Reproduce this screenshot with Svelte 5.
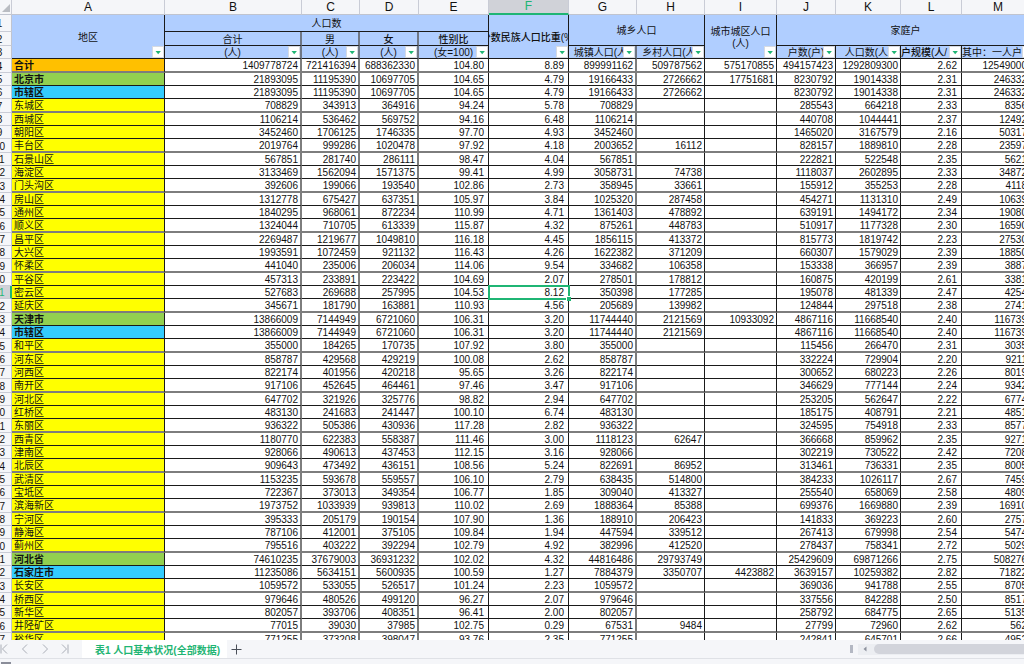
<script>
  const columns = [
    { id: 'A', width: 153 },
    { id: 'B', width: 137 },
    { id: 'C', width: 58 },
    { id: 'D', width: 59 },
    { id: 'E', width: 70 },
    { id: 'F', width: 80 },
    { id: 'G', width: 68 },
    { id: 'H', width: 68 },
    { id: 'I', width: 72 },
    { id: 'J', width: 59 },
    { id: 'K', width: 65 },
    { id: 'L', width: 61 },
    { id: 'M', width: 73 }
  ];

  // Fields: name, B..M. "-" marks an empty cell.
  const source = `合计 1409778724 721416394 688362330 104.80 8.89 899991162 509787562 575170855 494157423 1292809300 2.62 12549000
北京市 21893095 11195390 10697705 104.65 4.79 19166433 2726662 17751681 8230792 19014338 2.31 246332
市辖区 21893095 11195390 10697705 104.65 4.79 19166433 2726662 - 8230792 19014338 2.31 246332
东城区 708829 343913 364916 94.24 5.78 708829 - - 285543 664218 2.33 8356
西城区 1106214 536462 569752 94.16 6.48 1106214 - - 440708 1044441 2.37 12492
朝阳区 3452460 1706125 1746335 97.70 4.93 3452460 - - 1465020 3167579 2.16 50317
丰台区 2019764 999286 1020478 97.92 4.18 2003652 16112 - 828157 1889810 2.28 23597
石景山区 567851 281740 286111 98.47 4.04 567851 - - 222821 522548 2.35 5621
海淀区 3133469 1562094 1571375 99.41 4.99 3058731 74738 - 1118037 2602895 2.33 34872
门头沟区 392606 199066 193540 102.86 2.73 358945 33661 - 155912 355253 2.28 4118
房山区 1312778 675427 637351 105.97 3.84 1025320 287458 - 454271 1131310 2.49 10639
通州区 1840295 968061 872234 110.99 4.71 1361403 478892 - 639191 1494172 2.34 19080
顺义区 1324044 710705 613339 115.87 4.32 875261 448783 - 510917 1177328 2.30 16590
昌平区 2269487 1219677 1049810 116.18 4.45 1856115 413372 - 815773 1819742 2.23 27530
大兴区 1993591 1072459 921132 116.43 4.26 1622382 371209 - 660307 1579029 2.39 18850
怀柔区 441040 235006 206034 114.06 9.54 334682 106358 - 153338 366957 2.39 3887
平谷区 457313 233891 223422 104.69 2.07 278501 178812 - 160875 420199 2.61 3381
密云区 527683 269688 257995 104.53 8.12 350398 177285 - 195078 481339 2.47 4254
延庆区 345671 181790 163881 110.93 4.56 205689 139982 - 124844 297518 2.38 2741
天津市 13866009 7144949 6721060 106.31 3.20 11744440 2121569 10933092 4867116 11668540 2.40 116739
市辖区 13866009 7144949 6721060 106.31 3.20 11744440 2121569 - 4867116 11668540 2.40 116739
和平区 355000 184265 170735 107.92 3.80 355000 - - 115456 266470 2.31 3035
河东区 858787 429568 429219 100.08 2.62 858787 - - 332224 729904 2.20 9211
河西区 822174 401956 420218 95.65 3.26 822174 - - 300652 680223 2.26 8019
南开区 917106 452645 464461 97.46 3.47 917106 - - 346629 777144 2.24 9342
河北区 647702 321926 325776 98.82 2.94 647702 - - 253205 562647 2.22 6774
红桥区 483130 241683 241447 100.10 6.74 483130 - - 185175 408791 2.21 4851
东丽区 936322 505386 430936 117.28 2.82 936322 - - 324595 754918 2.33 8577
西青区 1180770 622383 558387 111.46 3.00 1118123 62647 - 366668 859962 2.35 9271
津南区 928066 490613 437453 112.15 3.16 928066 - - 302219 730522 2.42 7208
北辰区 909643 473492 436151 108.56 5.24 822691 86952 - 313461 736331 2.35 8005
武清区 1153235 593678 559557 106.10 2.79 638435 514800 - 384233 1026117 2.67 7459
宝坻区 722367 373013 349354 106.77 1.85 309040 413327 - 255540 658069 2.58 4809
滨海新区 1973752 1033939 939813 110.02 2.69 1888364 85388 - 699376 1669880 2.39 16910
宁河区 395333 205179 190154 107.90 1.36 188910 206423 - 141833 369223 2.60 2757
静海区 787106 412001 375105 109.84 1.94 447594 339512 - 267413 679998 2.54 5474
蓟州区 795516 403222 392294 102.79 4.92 382996 412520 - 278437 758341 2.72 5029
河北省 74610235 37679003 36931232 102.02 4.32 44816486 29793749 - 25429609 69871266 2.75 508276
石家庄市 11235086 5634151 5600935 100.59 1.27 7884379 3350707 4423882 3639157 10259382 2.82 71822
长安区 1059572 533055 526517 101.24 2.23 1059572 - - 369036 941788 2.55 8705
桥西区 979646 480526 499120 96.27 2.07 979646 - - 337556 842288 2.50 8517
新华区 802057 393706 408351 96.41 2.00 802057 - - 258792 684775 2.65 5135
井陉矿区 77015 39030 37985 102.75 0.29 67531 9484 - 27799 72960 2.62 562
裕华区 771255 373208 398047 93.76 2.35 771255 - - 242841 645701 2.66 4952`;

  const provinces = ['北京市', '天津市', '河北省'];
  const cities = ['市辖区', '石家庄市'];
  const level = (name) =>
    name === '合计' ? 'total' : provinces.includes(name) ? 'province' : cities.includes(name) ? 'city' : 'county';

  const rows = source.split('\n').map((line, i) => {
    const [name, ...values] = line.split(' ');
    return { number: i + 4, name, level: level(name), values: values.map((v) => (v === '-' ? '' : v)) };
  });

  let selected = $state({ row: 21, col: 'F' });
</script>

{#snippet filter(label)}
  <button class="filter" aria-label={label}>
    <svg viewBox="0 0 10 10" width="10" height="10"><path d="M2.500 4h5.400L5.200 7.200z" fill="#1fb574" /></svg>
  </button>
{/snippet}

<div class="app">
  <main class="sheet">
    <table>
      <colgroup>
        <col style="width: 24px" />
        {#each columns as c}<col style="width: {c.width}px" />{/each}
      </colgroup>
      <thead>
        <tr class="letters">
          <th class="corner"><svg viewBox="0 0 8 8" width="8" height="8"><path d="M8 0v8H0z" fill="#b9bcc2" /></svg></th>
          {#each columns as c}
            <th class:active={c.id === selected.col}>{c.id}</th>
          {/each}
        </tr>
        <tr class="r1">
          <th class="num">1</th>
          <th class="h" rowspan="3"><span>地区</span>{@render filter('地区')}</th>
          <th class="h" colspan="4"><span>人口数</span></th>
          <th class="h strong" rowspan="3"><span class="spill">少数民族人口比重(%)</span>{@render filter('少数民族人口比重')}</th>
          <th class="h" colspan="2" rowspan="2"><span>城乡人口</span></th>
          <th class="h" rowspan="3"><span>城市城区人口<br />(人)</span>{@render filter('城市城区人口')}</th>
          <th class="h" colspan="4" rowspan="2"><span>家庭户</span></th>
        </tr>
        <tr class="r2">
          <th class="num">2</th>
          <th class="h soft"><span>合计</span></th>
          <th class="h soft"><span>男</span></th>
          <th class="h soft strong"><span>女</span></th>
          <th class="h strong"><span>性别比</span></th>
        </tr>
        <tr class="r3">
          <th class="num">3</th>
          <th class="h soft"><span>(人)</span>{@render filter('合计')}</th>
          <th class="h soft"><span>(人)</span>{@render filter('男')}</th>
          <th class="h soft"><span>(人)</span>{@render filter('女')}</th>
          <th class="h"><span>(女=100)</span>{@render filter('性别比')}</th>
          <th class="h soft"><span class="spill">城镇人口(人)</span>{@render filter('城镇人口')}</th>
          <th class="h"><span class="spill">乡村人口(人)</span>{@render filter('乡村人口')}</th>
          <th class="h"><span class="spill">户数(户)</span>{@render filter('户数')}</th>
          <th class="h"><span class="spill">人口数(人)</span>{@render filter('人口数')}</th>
          <th class="h strong start"><span class="spill">户规模(人/</span>{@render filter('户规模')}</th>
          <th class="h start"><span class="spill">其中：一人户</span>{@render filter('一人户')}</th>
        </tr>
      </thead>
      <tbody>
        {#each rows as r}
          <tr>
            <th class="num" class:active={r.number === selected.row}>{r.number}</th>
            <td class="name {r.level}">{r.name}</td>
            {#each r.values as v, i}
              {@const id = columns[i + 1].id}
              <td class="v {id}">
                {v}{#if selected.row === r.number && selected.col === id}<i class="cursor"></i>{/if}
              </td>
            {/each}
          </tr>
        {/each}
      </tbody>
    </table>
  </main>

  <footer>
    <nav aria-label="工作表">
      <button aria-label="第一张"><svg viewBox="0 0 10 10"><path d="M1 0.500v9M7 0.500L2.500 5L7 9.500" /></svg></button>
      <button aria-label="上一张"><svg viewBox="0 0 10 10"><path d="M7 0.500L2.500 5L7 9.500" /></svg></button>
      <button aria-label="下一张"><svg viewBox="0 0 10 10"><path d="M3 0.500L7.500 5L3 9.500" /></svg></button>
      <button aria-label="最后一张"><svg viewBox="0 0 10 10"><path d="M2 0.500L6.500 5L2 9.500M8 0.500v9" /></svg></button>
    </nav>
    <button class="tab">表1 人口基本状况(全部数据)</button>
    <button class="add" aria-label="新建工作表"><svg viewBox="0 0 11 11"><path d="M5.500 0.500v10M0.500 5.500h10" /></svg></button>
    <div class="scroll">
      <span class="grip"></span>
      <div class="track">
        <button class="arrow" aria-label="向左滚动"><svg viewBox="0 0 4 6" width="4" height="6"><path d="M3.500 0.500v5L0.500 3z" fill="#8d929e" /></svg></button>
        <span class="thumb"></span>
      </div>
    </div>
  </footer>
  <div class="status"></div>
</div>

<style>
  :global(body) {
    margin: 0;
  }
  .app {
    display: flex;
    flex-direction: column;
    height: 100vh;
    overflow: hidden;
    background: #f5f6f9;
    color: #111;
    font-family: 'Liberation Sans', 'Noto Sans CJK SC', sans-serif;
    font-size: 10px;
  }
  button {
    margin: 0;
    padding: 0;
    border: 0;
    background: none;
    font: inherit;
    color: inherit;
  }
  svg {
    display: block;
  }
  .sheet {
    flex: 1;
    min-height: 0;
    overflow: hidden;
    background: #fff;
  }
  table {
    /* The row-number column is half scrolled out on the left. */
    margin-left: -12px;
    width: calc(100% + 22px);
    table-layout: fixed;
    border-collapse: separate;
    border-spacing: 0;
  }
  th,
  td {
    box-sizing: border-box;
    position: relative;
    padding: 2px 0 0;
    height: 13px;
    line-height: 10px;
    font-weight: 400;
    white-space: nowrap;
    overflow: hidden;
  }

  .letters th {
    height: 15px;
    padding: 0;
    line-height: 14px;
    font-size: 12px;
    background: #f5f6f9;
    border-right: 1px solid #c9ccd6;
    border-bottom: 1px solid #c0c4cf;
  }
  .letters th.active {
    line-height: 13px;
    background: #d0d2d8;
    color: #1fb574;
    border-bottom: 2px solid #1fb574;
  }
  .corner svg {
    margin: 2px 0 0 14px;
  }
  .num {
    text-align: center;
    background: #f5f6f9;
    border-right: 1px solid #c0c4cf;
    border-bottom: 1px solid #c9ccd6;
  }
  .num.active {
    background: #d0d2d8;
    color: #1fb574;
    border-right: 2px solid #1fb574;
  }

  .r1 th.num {
    height: 17px;
  }
  .r2 th {
    height: 14px;
  }
  .h {
    background: #b0ceff;
    border-right: 1px solid #1a1a1a;
    border-bottom: 1px solid #1a1a1a;
  }
  .r1 .h {
    line-height: 12px;
  }
  .h.soft {
    border-right: 2px solid #6f7785;
  }
  .strong {
    font-weight: 500;
  }
  .spill {
    display: flex;
    justify-content: center;
  }
  .start .spill {
    justify-content: flex-start;
  }
  .filter {
    position: absolute;
    right: 0;
    bottom: 0;
    background: #fff;
    border: 1px solid #d5dae2;
    width: 12px;
    height: 12px;
    box-sizing: border-box;
    overflow: hidden;
  }

  td {
    border-right: 1px solid #1a1a1a;
    border-bottom: 1px solid #1a1a1a;
  }
  tbody tr:nth-child(3n + 1) > * {
    height: 14px;
  }
  tbody tr:nth-child(3n + 1) > td {
    border-bottom: 2px solid #7d7d7d;
  }
  .name {
    padding-left: 2px;
  }
  .total {
    background: #ffc000;
  }
  .province {
    background: #92d050;
  }
  .city {
    background: #33ccff;
  }
  .county {
    background: #ff0;
  }
  .total,
  .province,
  .city {
    font-weight: 700;
  }
  .v {
    text-align: right;
    padding-right: 2px;
  }
  .v.B,
  .v.C,
  .v.D,
  .v.G {
    border-right: 2px solid #7d7d7d;
  }
  .v.E,
  .v.F,
  .v.L {
    padding-right: 4px;
  }
  .v.M {
    padding-right: 7px;
  }
  .v:has(.cursor) {
    overflow: visible;
  }
  .cursor {
    position: absolute;
    z-index: 1;
    inset: -1px -2px -2px -1px;
    border: 2px solid #1fb574;
  }
  .cursor::after {
    content: '';
    position: absolute;
    right: -3px;
    bottom: -3px;
    width: 4px;
    height: 4px;
    background: #1fb574;
    border: 1px solid #fff;
    border-right: 0;
    border-bottom: 0;
  }

  footer {
    display: flex;
    align-items: stretch;
    height: 18px;
    border-bottom: 1px solid #dfe1e6;
  }
  nav {
    display: flex;
    align-items: center;
    gap: 10px;
    width: 82px;
  }
  nav svg,
  .add svg {
    width: 10px;
    height: 10px;
    fill: none;
    stroke: #a9adb6;
    stroke-width: 1;
  }
  .add svg {
    width: 11px;
    height: 11px;
    stroke: #4a4f58;
  }
  .tab {
    padding: 0 7px 0 13px;
    background: #fff;
    color: #1fb574;
    font-weight: 700;
    white-space: nowrap;
  }
  .add {
    padding: 0 4px;
  }
  .scroll {
    display: flex;
    align-items: center;
    gap: 5px;
    margin-left: auto;
    width: 17%;
  }
  .grip {
    width: 3px;
    height: 8px;
    background: #b4b8c3;
  }
  .track {
    display: flex;
    flex: 1;
    align-items: center;
    gap: 7px;
    height: 11px;
    padding-left: 5px;
    background: #eceef2;
  }
  .thumb {
    flex: 1;
    height: 10px;
    border-radius: 5px 0 0 5px;
    background: #d2d4db;
  }
  .status {
    height: 5px;
    background: linear-gradient(#8a8d99, #8a8d99) 1px 100% / 10px 2px no-repeat;
  }
</style>
